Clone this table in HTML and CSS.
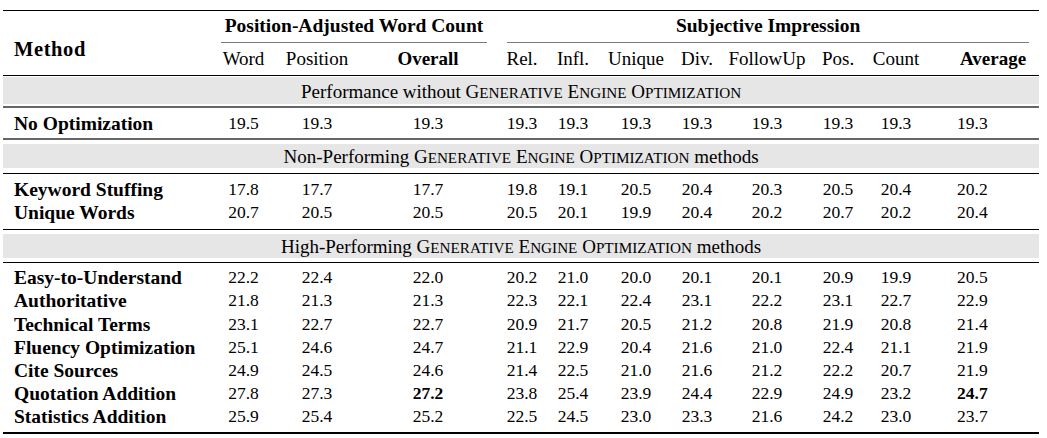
FILE: index.html
```html
<!DOCTYPE html>
<html lang="en">
<head>
<meta charset="utf-8">
<title>GEO results</title>
<link rel="stylesheet" href="styles.css">
</head>
<body>
<div class="page">
<table class="results">
  <colgroup>
    <col class="w-method">
    <col class="w-word">
    <col class="w-position">
    <col class="w-overall">
    <col class="w-rel">
    <col class="w-infl">
    <col class="w-unique">
    <col class="w-div">
    <col class="w-follow">
    <col class="w-pos">
    <col class="w-count">
    <col class="w-avg">
  </colgroup>
  <thead>
    <tr class="group-row">
      <th class="method-head" rowspan="2">Method</th>
      <th class="group" colspan="3"><div class="group-label g1">Position-Adjusted Word Count</div></th>
      <th class="group" colspan="8"><div class="group-label g2">Subjective Impression</div></th>
    </tr>
    <tr class="col-row">
      <th>Word</th>
      <th>Position</th>
      <th class="b">Overall</th>
      <th>Rel.</th>
      <th>Infl.</th>
      <th>Unique</th>
      <th>Div.</th>
      <th>FollowUp</th>
      <th>Pos.</th>
      <th>Count</th>
      <th class="b avg-head">Average</th>
    </tr>
  </thead>
  <tbody>
    <tr class="band band-1">
      <td colspan="12"><div class="band-inner">Performance without G<span class="sc">enerative</span> E<span class="sc">ngine</span> O<span class="sc">ptimization</span></div></td>
    </tr>
    <tr class="data first last rule-gray">
      <td class="name">No Optimization</td>
      <td>19.5</td><td>19.3</td><td>19.3</td>
      <td>19.3</td><td>19.3</td><td>19.3</td><td>19.3</td><td>19.3</td><td>19.3</td><td>19.3</td><td class="avg">19.3</td>
    </tr>
    <tr class="band band-2">
      <td colspan="12"><div class="band-inner">Non-Performing G<span class="sc">enerative</span> E<span class="sc">ngine</span> O<span class="sc">ptimization</span> methods</div></td>
    </tr>
    <tr class="data first-wide">
      <td class="name">Keyword Stuffing</td>
      <td>17.8</td><td>17.7</td><td>17.7</td>
      <td>19.8</td><td>19.1</td><td>20.5</td><td>20.4</td><td>20.3</td><td>20.5</td><td>20.4</td><td class="avg">20.2</td>
    </tr>
    <tr class="data rule-thin">
      <td class="name">Unique Words</td>
      <td>20.7</td><td>20.5</td><td>20.5</td>
      <td>20.5</td><td>20.1</td><td>19.9</td><td>20.4</td><td>20.2</td><td>20.7</td><td>20.2</td><td class="avg">20.4</td>
    </tr>
    <tr class="band band-3">
      <td colspan="12"><div class="band-inner">High-Performing G<span class="sc">enerative</span> E<span class="sc">ngine</span> O<span class="sc">ptimization</span> methods</div></td>
    </tr>
    <tr class="data first">
      <td class="name">Easy-to-Understand</td>
      <td>22.2</td><td>22.4</td><td>22.0</td>
      <td>20.2</td><td>21.0</td><td>20.0</td><td>20.1</td><td>20.1</td><td>20.9</td><td>19.9</td><td class="avg">20.5</td>
    </tr>
    <tr class="data">
      <td class="name">Authoritative</td>
      <td>21.8</td><td>21.3</td><td>21.3</td>
      <td>22.3</td><td>22.1</td><td>22.4</td><td>23.1</td><td>22.2</td><td>23.1</td><td>22.7</td><td class="avg">22.9</td>
    </tr>
    <tr class="data">
      <td class="name">Technical Terms</td>
      <td>23.1</td><td>22.7</td><td>22.7</td>
      <td>20.9</td><td>21.7</td><td>20.5</td><td>21.2</td><td>20.8</td><td>21.9</td><td>20.8</td><td class="avg">21.4</td>
    </tr>
    <tr class="data">
      <td class="name">Fluency Optimization</td>
      <td>25.1</td><td>24.6</td><td>24.7</td>
      <td>21.1</td><td>22.9</td><td>20.4</td><td>21.6</td><td>21.0</td><td>22.4</td><td>21.1</td><td class="avg">21.9</td>
    </tr>
    <tr class="data">
      <td class="name">Cite Sources</td>
      <td>24.9</td><td>24.5</td><td>24.6</td>
      <td>21.4</td><td>22.5</td><td>21.0</td><td>21.6</td><td>21.2</td><td>22.2</td><td>20.7</td><td class="avg">21.9</td>
    </tr>
    <tr class="data">
      <td class="name">Quotation Addition</td>
      <td>27.8</td><td>27.3</td><td class="b">27.2</td>
      <td>23.8</td><td>25.4</td><td>23.9</td><td>24.4</td><td>22.9</td><td>24.9</td><td>23.2</td><td class="avg b">24.7</td>
    </tr>
    <tr class="data last rule-bottom">
      <td class="name">Statistics Addition</td>
      <td>25.9</td><td>25.4</td><td>25.2</td>
      <td>22.5</td><td>24.5</td><td>23.0</td><td>23.3</td><td>21.6</td><td>24.2</td><td>23.0</td><td class="avg">23.7</td>
    </tr>
  </tbody>
</table>
</div>
</body>
</html>
```
FILE: styles.css
```css
html, body {
  margin: 0;
  padding: 0;
  background: #ffffff;
}

.page {
  padding: 9.5px 8px 0 3px;
  font-family: "Liberation Serif", "Times New Roman", serif;
  font-size: 19px;
  color: #000;
}

.results {
  width: 1036px;
  table-layout: fixed;
  border-collapse: separate;
  border-spacing: 0;
}

.w-method { width: 213px; }
.w-word { width: 55px; }
.w-position { width: 92px; }
.w-overall { width: 130px; }
.w-rel { width: 58px; }
.w-infl { width: 44px; }
.w-unique { width: 82px; }
.w-div { width: 40px; }
.w-follow { width: 100px; }
.w-pos { width: 42px; }
.w-count { width: 74px; }
.w-avg { width: 106px; }

.results th,
.results td {
  padding: 0;
  text-align: center;
  vertical-align: middle;
  font-weight: normal;
  line-height: 23px;
  white-space: nowrap;
}

/* header */
.group-row th {
  border-top: 1.5px solid #000;
}

.group-row .group {
  padding-top: 3px;
  font-weight: bold;
  font-size: 19.5px;
}

.group-label {
  padding-bottom: 5.5px;
  border-bottom: 1px solid #7a7a7a;
}

.g1 { margin: 0 6px 0 5px; }
.g2 { margin: 0 10px 0 14px; }

.results .method-head {
  vertical-align: bottom;
  text-align: left;
  padding: 0 0 13.5px 11px;
  font-weight: bold;
  font-size: 20.5px;
  letter-spacing: 0.6px;
  border-bottom: 1px solid #000;
}

.col-row th {
  padding: 3.5px 0 5px;
  border-bottom: 1px solid #000;
}

.results .b {
  font-weight: bold;
}

.results .avg-head {
  text-align: left;
  padding-left: 27px;
}

.results td.avg {
  text-align: left;
  padding-left: 24px;
}

/* bands */
.band td {
  padding: 4px 0 4.5px;
}

.band-inner {
  background: #e6e6e6;
  padding: 0.5px 0;
  height: 23px;
  line-height: 23px;
}

.band .sc {
  text-transform: uppercase;
  font-size: 0.8em;
  line-height: 0;
}

.band-1 td {
  padding: 1px 0 2.5px;
  border-bottom: 2px solid #666;
}

.band-1 .band-inner {
  padding: 3px 0 1px;
}

.band-2 td {
  border-bottom: 1px solid #000;
}

.band-3 td {
  padding: 4px 0 3.5px;
  border-bottom: 1px solid #000;
}

/* data */
.data td {
  height: 23.2px;
  line-height: 23.2px;
  font-size: 17.5px;
}

.data td.name {
  text-align: left;
  padding-left: 11px;
  font-weight: bold;
  font-size: 19.5px;
}

.data.first td {
  padding-top: 3.5px;
}

.data.first-wide td {
  padding-top: 4px;
}

.data.last td {
  padding-bottom: 3.5px;
}

.data.rule-gray td {
  border-bottom: 2px solid #666;
}

.data.rule-thin td {
  padding-bottom: 5px;
  border-bottom: 1px solid #000;
}

.data.rule-bottom td {
  border-bottom: 2px solid #000;
}
```
